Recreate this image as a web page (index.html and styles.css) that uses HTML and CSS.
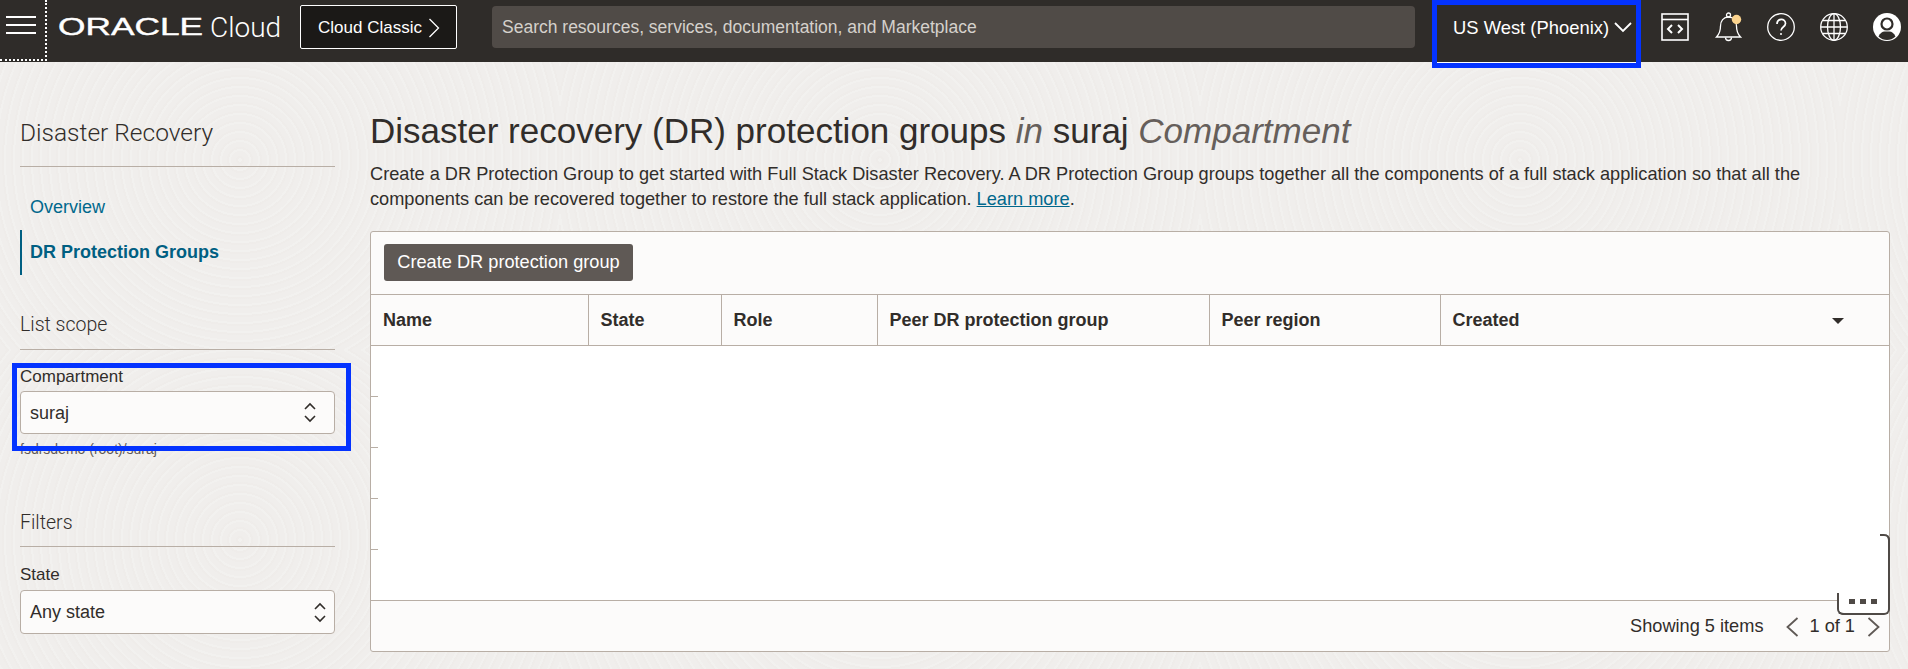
FILE: index.html
```html
<!DOCTYPE html>
<html lang="en">
<head>
    <meta charset="UTF-8">
    <title>Disaster Recovery - Oracle Cloud</title>
    <link rel="stylesheet" href="styles.css">
</head>
<body>
    <header class="topbar">
        <button class="menu-btn" aria-label="Menu">
            <svg width="30" height="18" viewBox="0 0 30 18"><path d="M0 1h30M0 9h30M0 17h30" stroke="#fff" stroke-width="2"/></svg>
        </button>
        <div class="brand"><span class="brand-oracle">ORACLE</span><span class="brand-cloud">Cloud</span></div>
        <button class="classic-btn">Cloud Classic
            <svg width="12" height="20" viewBox="0 0 12 20"><path d="M1.5 1l9 9-9 9" fill="none" stroke="#fff" stroke-width="1.3"/></svg>
        </button>
        <div class="search">Search resources, services, documentation, and Marketplace</div>
        <div class="region">
            <span>US West (Phoenix)</span>
            <svg width="18" height="11" viewBox="0 0 18 11"><path d="M1 1l8 8 8-8" fill="none" stroke="#fff" stroke-width="1.8"/></svg>
        </div>
        <div class="top-icons">
            <svg width="28" height="28" viewBox="0 0 28 28" fill="none" stroke="#fff" stroke-width="1.6"><rect x="1" y="1" width="26" height="26"/><path d="M1 6.500h26"/><path d="M11 12l-4 4 4 4M17 12l4 4-4 4" stroke-width="2"/></svg>
            <svg width="28" height="30" viewBox="0 0 28 30" fill="none" stroke="#fff" stroke-width="1.300"><path d="M2.500 25c3-3 4-6 4-11 0-5 3-9 8-9s8 4 8 9c0 5 1 8 4 11z"/><circle cx="14.500" cy="3" r="2"/><path d="M11.500 25.500a3 3 0 0 0 6 0"/><circle cx="22.500" cy="7.500" r="4.700" fill="#fbd38d" stroke="none"/></svg>
            <svg width="28" height="28" viewBox="0 0 28 28" fill="none" stroke="#fff" stroke-width="1.3"><circle cx="14" cy="14" r="13.300"/><path d="M10 11c0-6 8.500-6 8.500-.5 0 3.500-4.500 3.500-4.500 7" stroke-width="1.700"/><circle cx="14" cy="21" r="1" fill="#fff" stroke="none"/></svg>
            <svg width="28" height="28" viewBox="0 0 28 28" fill="none" stroke="#fff" stroke-width="1.3"><circle cx="14" cy="14" r="13.300"/><ellipse cx="14" cy="14" rx="6.500" ry="13.300"/><path d="M14 1v26M1 14h26M3 7.500h22M3 20.500h22"/></svg>
            <svg width="28" height="28" viewBox="0 0 28 28"><circle cx="14" cy="14" r="14" fill="#fff"/><circle cx="14" cy="11" r="5.500" fill="none" stroke="#2f2c29" stroke-width="2.200"/><path d="M5.500 23.500c1.500-3.500 4-5 6-5h5c2 0 4.500 1.500 6 5-2.500 2.500-5.500 3.500-8.500 3.500s-6-1-8.500-3.500z" fill="#2f2c29"/></svg>
        </div>
    </header>

    <div class="layout">
        <aside class="sidebar">
            <h2 class="side-title">Disaster Recovery</h2>
            <nav class="side-nav">
                <a class="nav-item">Overview</a>
                <a class="nav-item active">DR Protection Groups</a>
            </nav>

            <h3 class="side-section scope">List scope</h3>
            <div class="field compartment">
                <label class="field-label">Compartment</label>
                <div class="select">
                    <span>suraj</span>
                    <svg width="14" height="21" viewBox="0 0 14 21"><path d="M2 7l5-5 5 5M2 14l5 5 5-5" fill="none" stroke="#312d2a" stroke-width="1.600"/></svg>
                </div>
                <p class="field-hint">fsdrsdemo (root)/suraj</p>
            </div>

            <h3 class="side-section filters">Filters</h3>
            <div class="field">
                <label class="field-label state-label">State</label>
                <div class="select narrow-arrow">
                    <span>Any state</span>
                    <svg width="14" height="21" viewBox="0 0 14 21"><path d="M2 7l5-5 5 5M2 14l5 5 5-5" fill="none" stroke="#312d2a" stroke-width="1.600"/></svg>
                </div>
            </div>
        </aside>

        <main class="content">
            <h1 class="page-title">Disaster recovery (DR) protection groups <em>in</em> suraj <em>Compartment</em></h1>
            <div class="intro">
                <p>Create a DR Protection Group to get started with Full Stack Disaster Recovery. A DR Protection Group groups together all the components of a full stack application so that all the</p>
                <p>components can be recovered together to restore the full stack application. <a href="#">Learn more</a>.</p>
            </div>

            <section class="card">
                <div class="toolbar"><button class="primary-btn">Create DR protection group</button></div>
                <table class="grid">
                    <colgroup>
                        <col class="col-name"><col class="col-state"><col class="col-role"><col class="col-peer"><col class="col-region"><col>
                    </colgroup>
                    <thead>
                        <tr>
                            <th>Name</th>
                            <th>State</th>
                            <th>Role</th>
                            <th>Peer DR protection group</th>
                            <th>Peer region</th>
                            <th class="sorted">Created<i class="caret"></i></th>
                        </tr>
                    </thead>
                    <tbody>
                        <tr><td colspan="6"></td></tr>
                        <tr><td colspan="6"></td></tr>
                        <tr><td colspan="6"></td></tr>
                        <tr><td colspan="6"></td></tr>
                        <tr><td colspan="6"></td></tr>
                    </tbody>
                </table>
                <div class="pager">
                    <span class="pager-count">Showing 5 items</span>
                    <svg width="13" height="20" viewBox="0 0 13 20"><path d="M11.500 1l-10 9 10 9" fill="none" stroke="#5f5955" stroke-width="1.800"/></svg>
                    <span class="pager-page">1 of 1</span>
                    <svg width="13" height="20" viewBox="0 0 13 20"><path d="M1.500 1l10 9-10 9" fill="none" stroke="#5f5955" stroke-width="1.800"/></svg>
                </div>
                <div class="help-handle"><i></i><i></i><i></i></div>
            </section>
        </main>
    </div>
</body>
</html>
```

FILE: styles.css
```css
* {
    box-sizing: border-box;
}
html, body {
    height: 100%;
}
body {
    margin: 0;
    height: 669px;
    overflow: hidden;
    font-family: "Liberation Sans", Arial, sans-serif;
    font-size: 18px;
    color: #312d2a;
    background-color: #f0eeec;
    background-image:
        repeating-radial-gradient(circle at 320px 190px, rgba(255,255,255,.16) 0 2px, rgba(225,220,216,.1) 2px 4px, transparent 4px 9px);
    background-size: 640px 380px;
    background-position: -80px -30px;
}
button {
    font-family: inherit;
    cursor: pointer;
}

/* top bar */
.topbar {
    display: flex;
    align-items: center;
    height: 62px;
    padding-bottom: 8px;
    background: #2f2c29;
    color: #fff;
}
.menu-btn {
    align-self: flex-start;
    flex: none;
    width: 47px;
    height: 61px;
    padding: 0 0 10px 6px;
    display: flex;
    align-items: center;
    background: none;
    border: 0;
    border-right: 2px dotted #fff;
    border-bottom: 2px dotted #fff;
}
.brand {
    display: flex;
    align-items: center;
    width: 253px;
    padding-left: 11px;
}
.brand-oracle {
    display: inline-block;
    width: 152px;
    font-size: 24px;
    -webkit-text-stroke: 0.4px #fff;
    transform: scaleX(1.47);
    transform-origin: left center;
}
.brand-cloud {
    font-size: 28px;
    font-family: Roboto, sans-serif;
    font-weight: 300;
}
.classic-btn {
    display: flex;
    align-items: center;
    gap: 6px;
    width: 157px;
    height: 44px;
    padding: 2px 0 0 17px;
    font-size: 17px;
    color: #fff;
    background: #1b1917;
    border: 1px solid #fff;
    border-radius: 2px;
}
.search {
    width: 923px;
    height: 42px;
    margin-left: 35px;
    padding-left: 10px;
    line-height: 43px;
    font-size: 17.5px;
    color: #d5d1cc;
    background: #504b47;
    border-radius: 4px;
}
.region {
    display: flex;
    align-items: center;
    gap: 5px;
    flex: none;
    align-self: flex-start;
    position: relative;
    z-index: 2;
    width: 209px;
    height: 68px;
    margin-left: 17px;
    padding: 0 0 13px 16px;
    font-size: 18.4px;
    border: 5px solid #0433ff;
    box-shadow: inset 0 -1px 0 #fff;
}
.top-icons {
    display: flex;
    align-items: center;
    gap: 25px;
    margin-left: 20px;
}

/* page */
.layout {
    display: flex;
    gap: 35px;
    padding: 0 18px 0 20px;
}
.sidebar {
    flex: none;
    width: 315px;
}
.side-title {
    margin: 55px 0 0;
    padding-bottom: 17px;
    height: 50px;
    font-family: Roboto, sans-serif;
    font-size: 24.5px;
    font-weight: 300;
    line-height: 32px;
    border-bottom: 1px solid #b8aea5;
}
.side-nav {
    display: flex;
    flex-direction: column;
    margin-top: 18px;
}
.nav-item {
    display: flex;
    align-items: center;
    height: 45px;
    padding-left: 10px;
    color: #00688c;
}
.nav-item.active {
    font-weight: 700;
    color: #005f82;
    border-left: 2px solid #005f82;
    padding-left: 8px;
}
.side-section {
    margin: 0;
    font-family: Roboto, sans-serif;
    font-size: 19.5px;
    font-weight: 300;
    line-height: 28px;
    border-bottom: 1px solid #b8aea5;
}
.side-section.scope {
    margin-top: 36px;
    padding-bottom: 10px;
}
.side-section.filters {
    margin-top: 52px;
    padding-bottom: 9px;
}
.field-label {
    display: block;
    margin-top: 17px;
    font-size: 17px;
    line-height: 20px;
}
.state-label {
    margin-top: 18px;
}
.select {
    display: flex;
    align-items: center;
    justify-content: space-between;
    height: 43px;
    margin-top: 4px;
    padding: 0 17px 0 9px;
    background: #fcfbfa;
    border: 1px solid #b8aea5;
    border-radius: 4px;
}
.select span {
    padding-top: 2px;
}
.narrow-arrow {
    height: 44px;
    margin-top: 5px;
    padding-right: 7px;
}
.narrow-arrow span {
    padding-top: 1px;
}
.field-hint {
    margin: 7px 0 0;
    font-size: 14px;
    line-height: 16px;
    color: #5f5955;
}
.compartment {
    position: relative;
}
.compartment::after {
    content: "";
    position: absolute;
    left: -8px;
    right: -16px;
    top: -4px;
    height: 78px;
    border: 5px solid #0433ff;
}

/* main column */
.content {
    flex: 1;
    min-width: 0;
}
.page-title {
    margin: 48px 0 0;
    font-size: 35px;
    font-weight: 400;
    line-height: 42px;
}
.page-title em {
    color: #665f5b;
}
.intro {
    margin: 10px 0 0;
    font-size: 18.2px;
    line-height: 25px;
    white-space: nowrap;
}
.intro p {
    margin: 0;
}
.intro a {
    color: #00688c;
}
.card {
    position: relative;
    height: 421px;
    margin-top: 19px;
    background: #fcfbfa;
    border: 1px solid #b8aea5;
    border-radius: 3px;
}
.toolbar {
    height: 62px;
    padding: 12px 13px;
}
.primary-btn {
    height: 37px;
    width: 249px;
    padding: 0;
    font-size: 18.2px;
    color: #fff;
    background: #5f5955;
    border: 0;
    border-radius: 3px;
}
.grid {
    width: 100%;
    border-collapse: collapse;
    table-layout: fixed;
    background: #fff;
}
.col-name { width: 217px; }
.col-state { width: 133px; }
.col-role { width: 156px; }
.col-peer { width: 332px; }
.col-region { width: 231px; }
.grid th {
    height: 51px;
    padding: 0 0 0 12px;
    text-align: left;
    background: #fcfbfa;
    border: 1px solid #b8aea5;
}
.grid th:first-child {
    border-left: 0;
}
.grid th:last-child {
    border-right: 0;
}
.grid td {
    height: 51px;
    padding: 0;
    background: linear-gradient(#b8aea5, #b8aea5) left bottom / 7px 1px no-repeat;
}
.grid tr:last-child td {
    background: none;
    border-bottom: 1px solid #b8aea5;
}
.sorted {
    position: relative;
}
.caret {
    position: absolute;
    right: 45px;
    top: 23px;
    border-left: 6px solid transparent;
    border-right: 6px solid transparent;
    border-top: 6px solid #312d2a;
}
.pager {
    display: flex;
    align-items: center;
    justify-content: flex-end;
    height: 51px;
    padding-right: 9px;
    font-size: 18.2px;
}
.pager-count {
    margin-right: 23px;
}
.pager-page {
    margin: 0 12px 0 10px;
}
.help-handle {
    position: absolute;
    right: -1px;
    top: 302px;
    display: flex;
    align-items: flex-end;
    justify-content: center;
    gap: 5px;
    width: 52px;
    height: 81px;
    padding-bottom: 9px;
    background: linear-gradient(to bottom, rgba(255,255,255,0) 75%, #fff 76%);
    border-right: 2px solid #4f4a46;
    border-bottom: 2px solid #4f4a46;
    border-radius: 0 6px 6px 6px;
}
.help-handle::before {
    content: "";
    position: absolute;
    left: -1px;
    bottom: -2px;
    width: 6px;
    height: 20px;
    border-left: 2px solid #4f4a46;
    border-bottom: 2px solid #4f4a46;
    border-radius: 0 0 0 6px;
}
.help-handle::after {
    content: "";
    position: absolute;
    right: -2px;
    top: 0;
    width: 8px;
    height: 6px;
    border-top: 2px solid #4f4a46;
    border-right: 2px solid #4f4a46;
    border-radius: 0 6px 0 0;
}
.help-handle i {
    width: 6px;
    height: 5px;
    background: #4f4a46;
}
```
